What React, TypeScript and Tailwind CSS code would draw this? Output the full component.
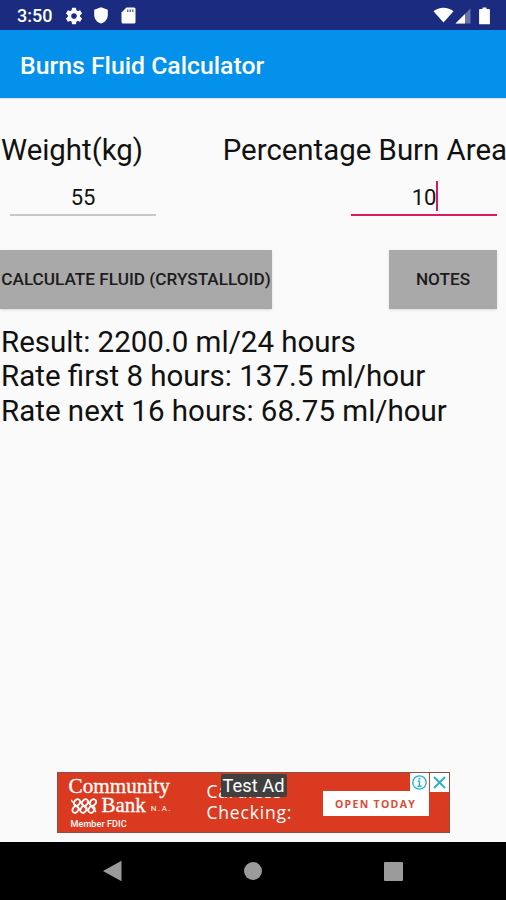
function StatusBar() {
  return (
    <div className="flex h-[30px] items-center bg-[#1a2b80] pl-[17px] pr-[16px] text-white">
      <span className="w-[35px] whitespace-nowrap text-[18px] font-medium leading-[30px] pt-[2px]">3:50</span>
      <svg className="ml-[13px] mt-px" width="18" height="18" viewBox="1 1 22 22" fill="currentColor">
        <path d="M19.43 12.98c.04-.32.07-.64.07-.98s-.03-.66-.07-.98l2.11-1.65c.19-.15.24-.42.12-.64l-2-3.46c-.12-.22-.39-.3-.61-.22l-2.49 1c-.52-.4-1.08-.73-1.69-.98l-.38-2.65C14.46 2.18 14.25 2 14 2h-4c-.25 0-.46.18-.49.42l-.38 2.65c-.61.25-1.17.59-1.69.98l-2.49-1c-.23-.09-.49 0-.61.22l-2 3.46c-.13.22-.07.49.12.64l2.11 1.65c-.04.32-.07.65-.07.98s.03.66.07.98l-2.11 1.65c-.19.15-.24.42-.12.64l2 3.46c.12.22.39.3.61.22l2.49-1c.52.4 1.08.73 1.69.98l.38 2.65c.03.24.24.42.49.42h4c.25 0 .46-.18.49-.42l.38-2.65c.61-.25 1.17-.59 1.69-.98l2.49 1c.23.09.49 0 .61-.22l2-3.46c.12-.22.07-.49-.12-.64l-2.11-1.65zM12 15.5c-1.93 0-3.5-1.57-3.5-3.5s1.57-3.5 3.5-3.5 3.5 1.57 3.5 3.5-1.57 3.5-3.5 3.5z" />
      </svg>
      <svg className="ml-[11px] mt-px" width="14" height="17" viewBox="0 0 14 17" fill="currentColor">
        <path d="M7 .3 13.8 2.8V8c0 4-2.8 7.4-6.8 8.6C3 15.400.2 12 .2 8V2.800z" />
      </svg>
      <svg className="ml-[13px] mt-px" width="15" height="17" viewBox="0 0 15 17" fill="currentColor">
        <path d="M5.500.5H13a1.500 1.500 0 0 1 1.500 1.500v13a1.500 1.500 0 0 1-1.500 1.500H2A1.500 1.500 0 0 1 .5 15V5.500z" />
        <path d="M6 2.500h1.500v2.500H6zM8.500 2.500H10v2.500H8.500zM11 2.500h1.500v2.500H11z" fill="#1a2b80" opacity=".7" />
      </svg>
      <svg className="ml-auto" width="21" height="17" viewBox="0 0 21 17" fill="currentColor">
        <path d="M.5 4.200C3.300 1.900 6.700.7 10.500.7s7.200 1.200 10 3.500L10.500 15.500z" />
      </svg>
      <svg className="ml-px mt-px" width="16" height="16" viewBox="0 0 16 16" fill="currentColor">
        <path d="M15.500.5v15H.5z" opacity=".35" />
        <path d="M10 6v9.500H.5z" />
      </svg>
      <svg className="ml-[8px] mt-px" width="11" height="18" viewBox="0 0 11 18" fill="currentColor">
        <path d="M3.500.5h4v1.600H10a.9.9 0 0 1 .9.9v13.400a.9.9 0 0 1-.9.9H1a.9.9 0 0 1-.9-.9V3a.9.9 0 0 1 .9-.9h2.500z" />
      </svg>
    </div>
  )
}

function BankLogo() {
  return (
    <svg className="ml-[2px] mr-[5px]" width="26" height="16" viewBox="0 0 26 16" fill="none" stroke="currentColor" strokeWidth="1.800">
      <g transform="translate(1 0)">
        <ellipse cx="5" cy="4.500" rx="2.800" ry="3.500" transform="rotate(35 5 4.500)" />
        <ellipse cx="3.500" cy="11.500" rx="2.800" ry="3.500" transform="rotate(35 3.500 11.500)" />
        <ellipse cx="13" cy="4.500" rx="2.800" ry="3.500" transform="rotate(35 13 4.500)" />
        <ellipse cx="11.500" cy="11.500" rx="2.800" ry="3.500" transform="rotate(35 11.500 11.500)" />
        <ellipse cx="21" cy="4.500" rx="2.800" ry="3.500" transform="rotate(35 21 4.500)" />
        <ellipse cx="19.500" cy="11.500" rx="2.800" ry="3.500" transform="rotate(35 19.500 11.500)" />
        <path d="M-1 2 8 12M8 3l8 10M15 3l9 11" strokeWidth="1.300" />
      </g>
    </svg>
  )
}

function AdBanner() {
  return (
    <div className="relative mx-auto mb-[9px] flex h-[61px] w-[393px] border border-[#8b5148] bg-[#da3b20] text-white">
      <div className="w-[149px] pl-[11px] pt-[4px]">
        <div className="font-['Liberation_Serif',serif] text-[21.2px] leading-[19px] [-webkit-text-stroke:0.3px]">Community</div>
        <div className="flex h-[19px] items-center">
          <BankLogo />
          <span className="font-['Liberation_Serif',serif] text-[21px] leading-[19px] [-webkit-text-stroke:0.3px]">Bank</span>
          <span className="ml-[5px] mt-[6px] text-[8px] leading-[10px] tracking-[1.500px]">N.A.</span>
        </div>
        <div className="ml-[2px] mt-[3px] text-[9px] font-medium leading-[12px] tracking-[0.1px]">Member FDIC</div>
      </div>
      <div className="pt-[8px] font-['Open_Sans',sans-serif] text-[17.5px] leading-[21px] tracking-[0.8px]">
        <div>Cardless</div>
        <div>Checking:</div>
      </div>
      <div className="absolute left-[163px] top-[1px] h-[23px] w-[66px] rounded-[2px] bg-[#40403f] text-center text-[18.300px] leading-[23px]">
        Test Ad
      </div>
      <div className="absolute left-[265px] top-[18px] h-[25px] w-[106px] bg-white text-center font-['Open_Sans',sans-serif] text-[10.5px] font-bold leading-[26px] tracking-[1.300px] text-[#d94c35]">
        OPEN TODAY
      </div>
      <div className="absolute right-0 top-0 flex gap-px">
        <svg className="bg-white" width="19" height="19" viewBox="0 0 19 19" fill="none" stroke="#24b0cb" strokeWidth="1.300">
          <circle cx="9.500" cy="9.500" r="6.700" />
          <path d="M7.800 8.200h1.700v5M7.500 13.200h4" strokeWidth="1.400" />
          <path d="M9.500 5v1.600" strokeWidth="2" />
        </svg>
        <svg className="bg-white" width="19" height="19" viewBox="0 0 19 19" fill="none" stroke="#24b0cb" strokeWidth="1.800">
          <path d="m4 4 11 11M15 4 4 15" />
        </svg>
      </div>
    </div>
  )
}

function NavBar() {
  return (
    <div className="flex h-[58px] items-center justify-between bg-black pl-[102px] pr-[103px]">
      <svg width="20" height="22" viewBox="0 0 20 22" fill="#9b9b9b">
        <path d="M19.500.8v20.400L1 11z" />
      </svg>
      <div className="size-[18px] rounded-full bg-[#9b9b9b]" />
      <div className="size-[19px] rounded-[1px] bg-[#9b9b9b]" />
    </div>
  )
}

export default function App() {
  return (
    <div className="flex h-[900px] w-[506px] flex-col overflow-hidden bg-[#fafafa] font-[Roboto,sans-serif] text-[#111]">
      <StatusBar />
      <header className="flex h-[68px] items-center bg-[#0391eb] pl-[20px] pt-[4px] text-[24.8px] font-medium text-white">
        Burns Fluid Calculator
      </header>

      <main className="flex flex-1 flex-col border-t border-[#e3e3e3] pt-[34px]">
        <div className="flex justify-between whitespace-nowrap pl-px text-[29.4px] leading-[34px]">
          <label>Weight(kg)</label>
          <label className="-mr-px">Percentage Burn Area</label>
        </div>

        <div className="flex justify-between pl-[10px] pr-[9px] pt-[14px] text-[22px]">
          <div className="h-[35px] w-[146px] border-b-2 border-[#c7c7c7] text-center leading-[34px]">55</div>
          <div className="flex h-[35px] w-[146px] justify-center border-b-2 border-[#d81b60] leading-[34px]">
            <span className="pl-[2px]">10</span>
            <span className="h-[30px] w-[2px] bg-[#d81b60]" />
          </div>
        </div>

        <div className="flex justify-between pr-[9px] pt-[34px] text-[17.2px] font-medium text-[#1c1c1c]">
          <button className="h-[59px] w-[272px] whitespace-nowrap bg-[#a9a9a9] pt-px shadow-sm">CALCULATE FLUID (CRYSTALLOID)</button>
          <button className="h-[59px] w-[108px] bg-[#a9a9a9] pt-px shadow-sm">NOTES</button>
        </div>

        <div className="pl-px pt-[16px] text-[29.5px] leading-[34.3px]">
          <p>Result: 2200.0 ml/24 hours</p>
          <p>Rate first 8 hours: 137.5 ml/hour</p>
          <p>Rate next 16 hours: 68.75 ml/hour</p>
        </div>

        <div className="mt-auto">
          <AdBanner />
        </div>
      </main>
      <NavBar />
    </div>
  )
}
